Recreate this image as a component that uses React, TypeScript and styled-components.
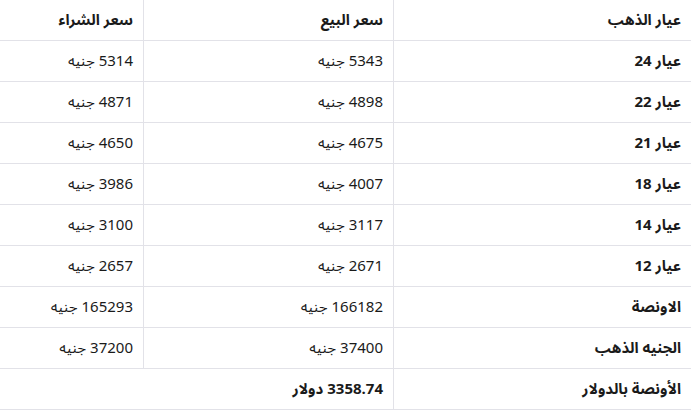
import React from "react";
import styled, { createGlobalStyle } from "styled-components";

const Global = createGlobalStyle`
  html, body { margin: 0; padding: 0; background: #ffffff; }
  body { font-family: "Noto Sans Arabic", "DejaVu Sans", "Noto Sans", sans-serif; }
`;

const Table = styled.table`
  width: 691px;
  border-collapse: collapse;
  direction: rtl;
  color: #1a1a1a;
  font-size: 15px;
`;

const Cell = styled.td<{ $bold?: boolean; $w?: number }>`
  height: 40px;
  padding: 0 10px;
  text-align: right;
  vertical-align: middle;
  font-weight: ${(p) => (p.$bold ? 700 : 400)};
  border-bottom: 1px solid #e2e2e8;
  border-left: 1px solid #e2e2e8;
  ${(p) => (p.$w ? `width: ${p.$w}px;` : "")}
  &:last-child { border-left: none; }
`;

const Head = styled(Cell).attrs({ as: "th" })`
  font-weight: 700;
`;

const rows: [string, string, string][] = [
  ["عيار 24", "5343 جنيه", "5314 جنيه"],
  ["عيار 22", "4898 جنيه", "4871 جنيه"],
  ["عيار 21", "4675 جنيه", "4650 جنيه"],
  ["عيار 18", "4007 جنيه", "3986 جنيه"],
  ["عيار 14", "3117 جنيه", "3100 جنيه"],
  ["عيار 12", "2671 جنيه", "2657 جنيه"],
  ["الاونصة", "166182 جنيه", "165293 جنيه"],
  ["الجنيه الذهب", "37400 جنيه", "37200 جنيه"],
];

export default function App() {
  return (
    <>
      <Global />
      <Table>
        <thead>
          <tr>
            <Head $w={277}>عيار الذهب</Head>
            <Head $w={229}>سعر البيع</Head>
            <Head>سعر الشراء</Head>
          </tr>
        </thead>
        <tbody>
          {rows.map((r) => (
            <tr key={r[0]}>
              <Cell $bold>{r[0]}</Cell>
              <Cell>{r[1]}</Cell>
              <Cell>{r[2]}</Cell>
            </tr>
          ))}
          <tr>
            <Cell $bold>الأونصة بالدولار</Cell>
            <Cell $bold colSpan={2}>3358.74 دولار</Cell>
          </tr>
        </tbody>
      </Table>
    </>
  );
}
